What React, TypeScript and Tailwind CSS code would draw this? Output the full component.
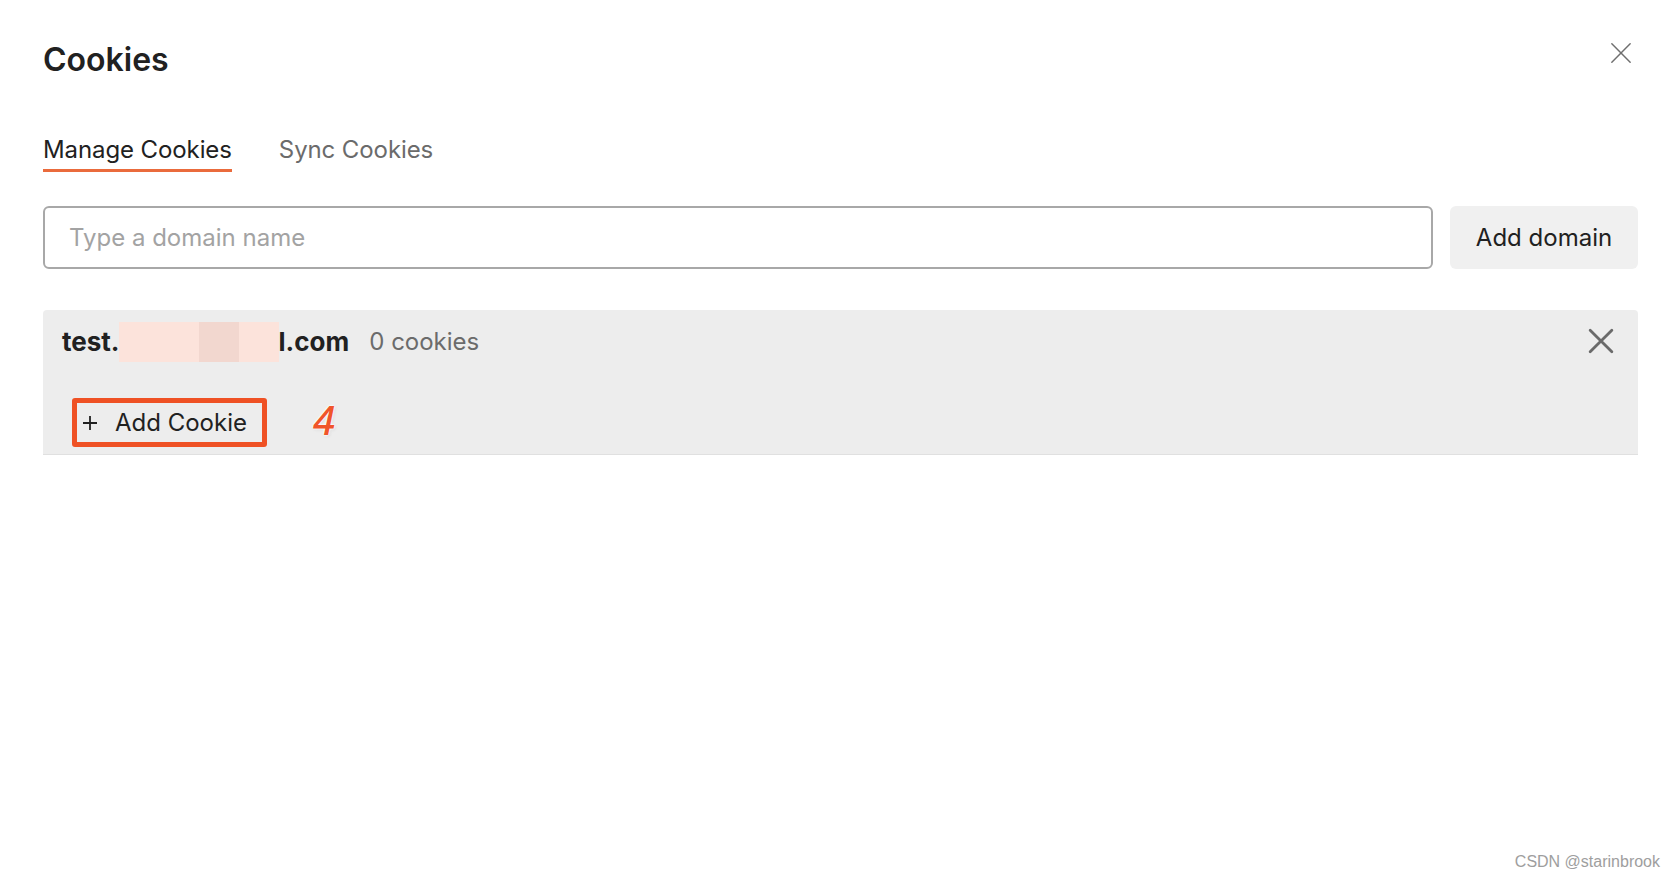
import React from 'react';

function CloseIcon({ size, stroke, color }: { size: number; stroke: number; color: string }) {
  return (
    <svg width={size} height={size} viewBox="0 0 24 24" fill="none">
      <path d="M2 2L22 22M22 2L2 22" stroke={color} strokeWidth={stroke} strokeLinecap="round" />
    </svg>
  );
}

function PlusIcon() {
  return (
    <svg width="14" height="14" viewBox="0 0 14 14" fill="none">
      <path d="M7 0V14M0 7H14" stroke="#212121" strokeWidth="1.8" />
    </svg>
  );
}

export default function App() {
  return (
    <div className="relative w-[1676px] h-[876px] bg-white text-[#212121] font-['Inter','Noto_Sans',sans-serif] overflow-hidden">
      <div className="pl-[43px] pr-[38px]">
        {/* header */}
        <div className="flex items-start justify-between pt-[41px]">
          <h1 className="text-[32px] leading-[38px] font-semibold">Cookies</h1>
          <button className="mt-[1px] mr-[6px]">
            <CloseIcon size={22} stroke={1.6} color="#6f6f6f" />
          </button>
        </div>

        {/* tabs */}
        <div className="flex gap-[47px] mt-[55px]">
          <div className="flex flex-col">
            <span className="text-[24px] leading-[32px] tracking-[-0.1px]">Manage Cookies</span>
            <div className="mt-[3px] h-[3px] bg-[#ea6b3c]" />
          </div>
          <div className="flex flex-col">
            <span className="text-[24px] leading-[32px] tracking-[-0.1px] text-[#6b6b6b]">Sync Cookies</span>
          </div>
        </div>

        {/* domain input */}
        <div className="flex gap-[17px] mt-[34px]">
          <div className="flex-1 h-[63px] border-2 border-[#a8a8a8] rounded-[6px] flex items-center px-[24px]">
            <span className="text-[24px] text-[#a3a3a3]">Type a domain name</span>
          </div>
          <button className="w-[188px] h-[63px] rounded-[6px] bg-[#f0f0f0] text-[24px] text-[#212121]">
            Add domain
          </button>
        </div>

        {/* domain panel */}
        <div className="mt-[41px] bg-[#ededed] rounded-t-[4px] border-b border-[#e0e0e0] h-[145px] flex flex-col">
          <div className="flex items-center justify-between pt-[16px] pl-[19px] pr-[24px]">
            <div className="flex items-center h-[32px]">
              <span className="text-[26px] font-bold leading-[32px]">test.</span>
              <span className="flex h-[40px] -ml-[1px]">
                <span className="w-[80px] bg-[#fce3db]" />
                <span className="w-[40px] bg-[#f2d7cf]" />
                <span className="w-[40px] bg-[#fce3db]" />
              </span>
              <span className="text-[26px] font-bold leading-[32px]">l.com</span>
              <span className="ml-[20px] text-[24px] leading-[32px] text-[#6b6b6b]">0 cookies</span>
            </div>
            <button className="-mt-[3px]">
              <CloseIcon size={26} stroke={2.6} color="#6a6a6a" />
            </button>
          </div>

          <div className="flex items-center mt-[40px] pl-[29px]">
            <div className="w-[195px] h-[49px] border-[5px] border-[#ef5124] rounded-[3px] flex items-center pl-[6px]">
              <PlusIcon />
              <span className="ml-[18px] text-[24px] leading-[32px]">Add Cookie</span>
            </div>
            <span
              className="ml-[46px] -mt-[6px] text-[40px] leading-[40px] italic font-medium text-[#f0552a] font-['Noto_Sans',sans-serif]"
              style={{ textShadow: '0 0 2px #fff, 0 0 2px #fff, 0 0 3px #fff, 1px 1px 3px #cfcfcf' }}
            >
              4
            </span>
          </div>
        </div>
      </div>

      <div className="absolute right-[16px] bottom-[2px] text-[16px] text-[#9e9e9e] font-['Liberation_Sans',Arial,sans-serif]">
        CSDN @starinbrook
      </div>
    </div>
  );
}
